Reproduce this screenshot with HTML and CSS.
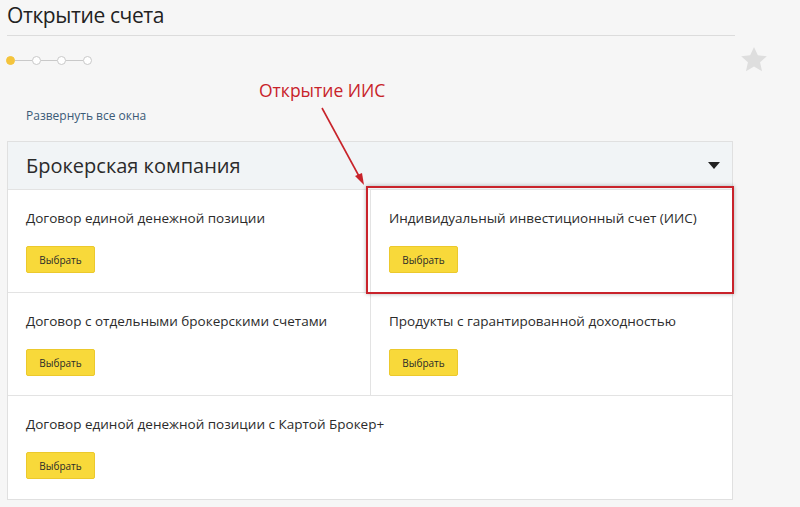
FILE: index.html
```html
<!DOCTYPE html>
<html lang="ru">
  <head>
    <meta charset="UTF-8" />
    <meta name="viewport" content="width=device-width, initial-scale=1.0" />
    <title>Открытие счета</title>
    <link rel="stylesheet" href="styles.css">
  </head>
  <body>
    <div class="page">
      <h1 class="title">Открытие счета</h1>
      <div class="steps-row">
        <div class="steps">
          <span class="step active"></span>
          <span class="step-line"></span>
          <span class="step"></span>
          <span class="step-line"></span>
          <span class="step"></span>
          <span class="step-line"></span>
          <span class="step"></span>
        </div>
        <svg class="star" width="28" height="27" viewBox="0 0 24 23">
          <path d="M12 0.8l3.3 7.1 7.7 0.8-5.8 5.2 1.7 7.6-6.9-4-6.9 4 1.7-7.6-5.8-5.2 7.7-0.8z" fill="#dedede" />
        </svg>
      </div>
      <a class="expand" href="#">Развернуть все окна</a>

      <div class="panel">
        <div class="panel-head">
          <span>Брокерская компания</span>
          <span class="caret"></span>
        </div>
        <div class="grid">
          <div class="cell">
            <p>Договор единой денежной позиции</p>
            <button class="pick">Выбрать</button>
          </div>
          <div class="cell right">
            <p>Индивидуальный инвестиционный счет (ИИС)</p>
            <button class="pick">Выбрать</button>
          </div>
          <div class="cell">
            <p>Договор с отдельными брокерскими счетами</p>
            <button class="pick">Выбрать</button>
          </div>
          <div class="cell right">
            <p>Продукты с гарантированной доходностью</p>
            <button class="pick">Выбрать</button>
          </div>
          <div class="cell wide">
            <p>Договор единой денежной позиции с Картой Брокер+</p>
            <button class="pick">Выбрать</button>
          </div>
        </div>
      </div>

      <!-- annotation over the screenshot -->
      <div class="note">Открытие ИИС</div>
      <svg class="arrow" width="60" height="90" viewBox="0 0 60 90">
        <line x1="2" y1="2" x2="40" y2="72" stroke="#c8232a" stroke-width="1.6" />
        <path d="M44 79 L35 70 L42 67 Z" fill="#c8232a" />
      </svg>
      <div class="highlight"></div>
    </div>
  </body>
</html>
```
FILE: styles.css
```css
body {
  margin: 0;
  background: #f6f6f6;
  font-family: "Open Sans", "Noto Sans", sans-serif;
  color: #2b2b2b;
}
.page {
  position: relative;
  padding: 0 0 0 7px;
  width: 793px;
  height: 507px;
  overflow: hidden;
}
.title {
  margin: 0;
  padding-top: 1px;
  font-size: 21px;
  font-weight: 400;
  letter-spacing: -0.4px;
  line-height: 29px;
  color: #222;
  width: 728px;
  height: 34px;
  border-bottom: 1px solid #dcdcdc;
}
.steps-row {
  display: flex;
  justify-content: space-between;
  align-items: center;
  width: 761px;
  height: 48px;
}
.steps {
  display: flex;
  align-items: center;
  margin-left: -1px;
}
.step {
  box-sizing: border-box;
  width: 9px;
  height: 9px;
  border: 1px solid #c9c9c9;
  border-radius: 50%;
  background: #fff;
}
.step.active {
  background: #f4c43c;
  border-color: #f4c43c;
}
.step-line {
  width: 16.5px;
  height: 1px;
  background: #c9c9c9;
}
.star {
  margin-top: -2px;
}
.expand {
  display: block;
  margin: 23px 0 0 19px;
  font-size: 12px;
  line-height: 18px;
  color: #3b5a76;
  text-decoration: none;
}
.panel {
  margin-top: 16px;
  width: 724px;
  border: 1px solid #e0e0e0;
  background: #fff;
}
.panel-head {
  display: flex;
  justify-content: space-between;
  align-items: center;
  height: 47px;
  padding: 0 12px 0 18px;
  background: #f1f4f6;
  border-bottom: 1px solid #e3e3e3;
  font-size: 20px;
  color: #2b2b2b;
}
.caret {
  width: 0;
  height: 0;
  border-left: 6px solid transparent;
  border-right: 6px solid transparent;
  border-top: 7px solid #222;
  margin-top: -1px;
}
.grid {
  display: grid;
  grid-template-columns: 362px 362px;
}
.cell {
  height: 103px;
  box-sizing: border-box;
  padding: 18px 18px 0;
  border-bottom: 1px solid #e3e3e3;
}
.cell.right {
  border-left: 1px solid #e3e3e3;
}
.cell.wide {
  grid-column: 1 / 3;
  border-bottom: none;
}
.cell p {
  margin: 0 0 18px;
  font-size: 13.5px;
  line-height: 20px;
  color: #2b2b2b;
}
.pick {
  width: 69px;
  height: 27px;
  padding: 0;
  border: 1px solid #ecc92c;
  border-radius: 2px;
  background: #f8d93a;
  font-family: "Open Sans", sans-serif;
  font-size: 10px;
  color: #2a2a2a;
  cursor: pointer;
}
.note {
  position: absolute;
  left: 259px;
  top: 78px;
  font-size: 17.5px;
  line-height: 24px;
  color: #c8232a;
}
.arrow {
  position: absolute;
  left: 320px;
  top: 106px;
}
.highlight {
  position: absolute;
  left: 366px;
  top: 186px;
  width: 364px;
  height: 104px;
  border: 2px solid #c9232b;
  box-shadow: 0 0 4px rgba(0, 0, 0, 0.3);
}
```
